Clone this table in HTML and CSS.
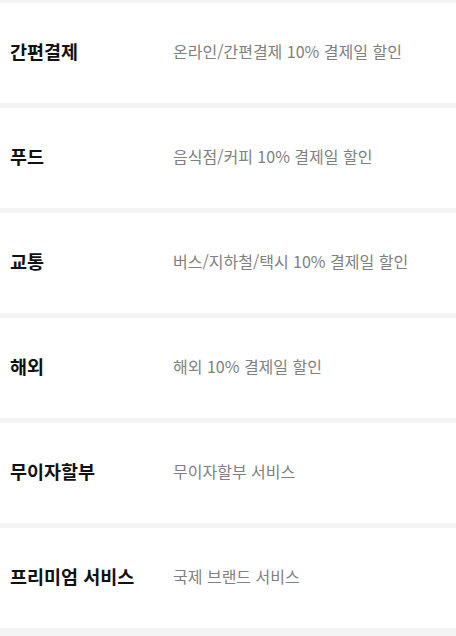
FILE: index.html
```html
<!DOCTYPE html>
<html lang="ko">
<head>
<meta charset="utf-8">
<link rel="stylesheet" href="styles.css">
</head>
<body>
<div class="list">
  <div class="row"><div class="title">간편결제</div><div class="desc">온라인/간편결제 10% 결제일 할인</div></div>
  <div class="row"><div class="title">푸드</div><div class="desc">음식점/커피 10% 결제일 할인</div></div>
  <div class="row"><div class="title">교통</div><div class="desc">버스/지하철/택시 10% 결제일 할인</div></div>
  <div class="row"><div class="title">해외</div><div class="desc">해외 10% 결제일 할인</div></div>
  <div class="row"><div class="title">무이자할부</div><div class="desc">무이자할부 서비스</div></div>
  <div class="row"><div class="title">프리미엄 서비스</div><div class="desc">국제 브랜드 서비스</div></div>
</div>
</body>
</html>
```
FILE: styles.css
```css
html, body {
  margin: 0;
  padding: 0;
  background: #f4f4f4;
}
body {
  font-family: "Noto Sans CJK KR", "Noto Sans", sans-serif;
}
.list {
  display: flex;
  flex-direction: column;
  gap: 5px;
  padding-top: 3px;
}
.row {
  height: 100px;
  background: #ffffff;
  display: flex;
  align-items: center;
  padding-left: 10px;
  padding-bottom: 3px;
  box-sizing: border-box;
}
.title {
  width: 163px;
  font-size: 18.5px;
  font-weight: 700;
  color: #111111;
}
.desc {
  font-size: 16px;
  color: #808080;
}
.desc, .title {
  line-height: 1.3;
}
```
